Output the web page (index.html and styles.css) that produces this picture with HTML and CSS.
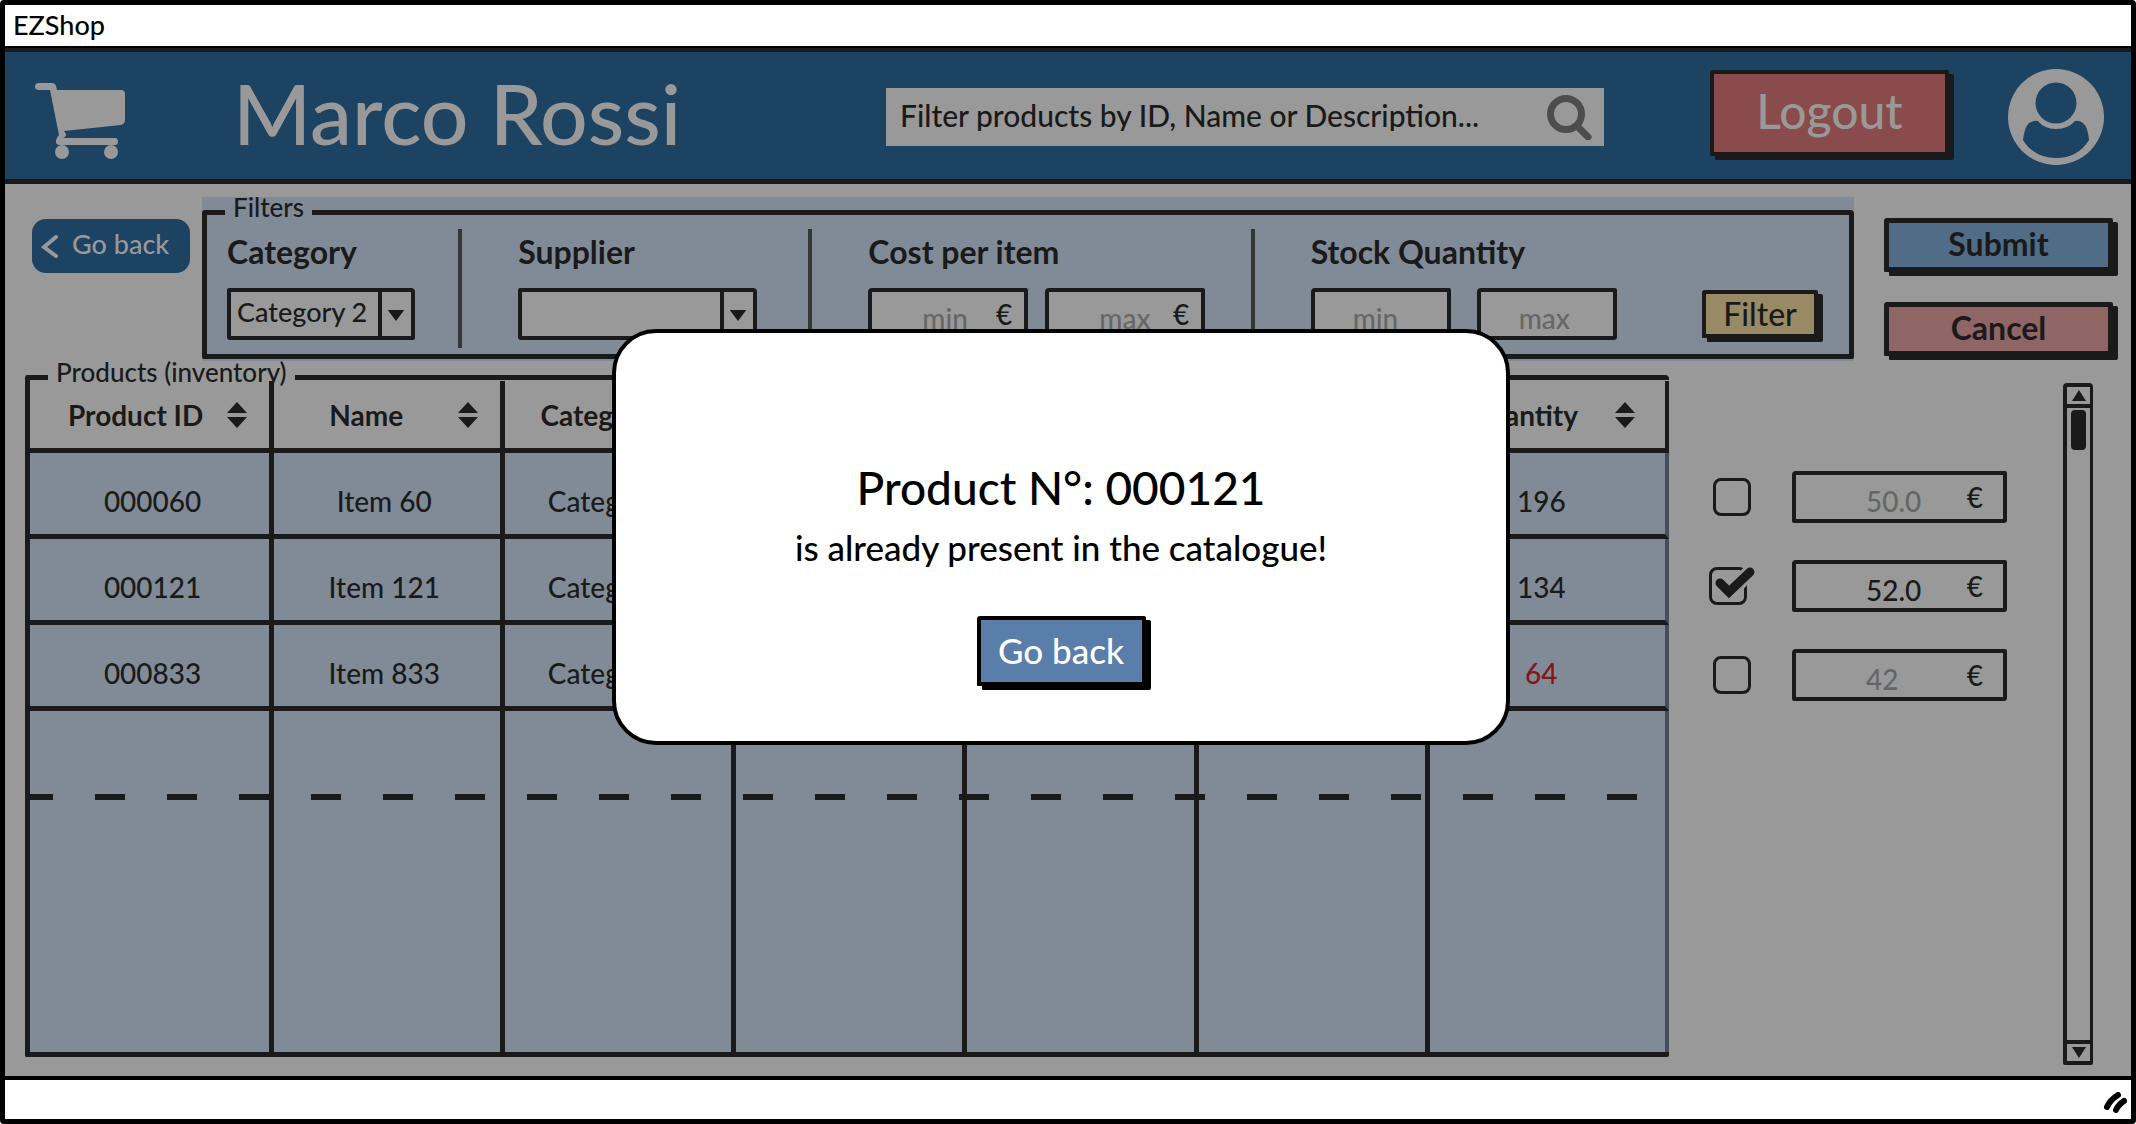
FILE: index.html
```html
<!DOCTYPE html>
<html lang="en">
<head>
<meta charset="utf-8">
<title>EZShop</title>
<link rel="stylesheet" href="styles.css">
</head>
<body>
<div class="window">
  <div class="titlebar">EZShop</div>

  <header class="header">
    <svg class="cart" viewBox="0 0 90 76" aria-hidden="true">
      <path d="M4 0H17Q20 0 21 3L22 7H86Q90 7 90 11V37Q90 41 86 42L29 48 31 51Q31 54 28 55H80Q83 55 83 58.500T80 62H25Q20 62 21 57Q22 54 24 52L15 7H4Q0 7 0 3.500T4 0Z"/>
      <circle cx="27" cy="69" r="7"/><circle cx="76" cy="69" r="7"/>
    </svg>
    <h1 class="user-name">Marco Rossi</h1>
    <form class="search" role="search">
      <input class="search-input" type="text" aria-label="Filter products" value="Filter products by ID, Name or Description...">
      <svg class="search-icon" viewBox="0 0 45 45" aria-hidden="true">
        <circle cx="19" cy="19" r="15.500"/><path d="M31 32L41 42"/>
      </svg>
    </form>
    <button class="sketch-button logout" type="button">Logout</button>
    <svg class="avatar" viewBox="0 0 96 96" aria-hidden="true">
      <circle class="avatar-disc" cx="48" cy="48" r="48"/>
      <circle cx="48" cy="34" r="20.500"/>
      <path d="M15 71Q17 55 23 53Q27 51 30 52Q36 60 48 60T67 52Q71 51 75 54Q80 58 81 71Q70 89 48 89T15 71Z"/>
    </svg>
  </header>

  <main class="main">
    <div class="toolbar">
      <button class="back" type="button">
        <svg class="chevron" viewBox="0 0 17 23" aria-hidden="true"><path d="M15 2L3 12L15 21"/></svg>
        Go back
      </button>

      <div class="filters-panel">
        <fieldset class="filters">
          <legend>Filters</legend>
          <div class="filter-groups">
            <div class="group group-category">
              <label class="group-title" for="category">Category</label>
              <div class="select-box">
                <select id="category"><option>Category 2</option></select>
                <svg class="select-arrow" viewBox="0 0 18 12" aria-hidden="true"><path d="M0 0H18L9 12Z"/></svg>
              </div>
            </div>
            <div class="group group-supplier">
              <label class="group-title" for="supplier">Supplier</label>
              <div class="select-box">
                <select id="supplier"><option></option></select>
                <svg class="select-arrow" viewBox="0 0 18 12" aria-hidden="true"><path d="M0 0H18L9 12Z"/></svg>
              </div>
            </div>
            <div class="group group-cost">
              <span class="group-title">Cost per item</span>
              <div class="range">
                <label class="field"><input type="text" placeholder="min" aria-label="Minimum cost"><span>€</span></label>
                <label class="field"><input type="text" placeholder="max" aria-label="Maximum cost"><span>€</span></label>
              </div>
            </div>
            <div class="group group-stock">
              <span class="group-title">Stock Quantity</span>
              <div class="range">
                <label class="field"><input type="text" placeholder="min" aria-label="Minimum stock"></label>
                <label class="field"><input type="text" placeholder="max" aria-label="Maximum stock"></label>
                <button class="sketch-button filter" type="button">Filter</button>
              </div>
            </div>
          </div>
        </fieldset>
      </div>

      <div class="actions">
        <button class="sketch-button submit" type="submit">Submit</button>
        <button class="sketch-button cancel" type="button">Cancel</button>
      </div>
    </div>

    <div class="inventory">
      <fieldset class="products">
        <legend>Products (inventory)</legend>
        <table class="product-table">
          <colgroup><col class="col-id"><col class="col-data" span="5"><col></colgroup>
          <thead>
            <tr>
              <th><div class="head"><span>Product ID</span><svg class="sort" viewBox="0 0 20 26"><path d="M10 0L20 11H0ZM0 15H20L10 26Z"/></svg></div></th>
              <th><div class="head"><span>Name</span><svg class="sort" viewBox="0 0 20 26"><path d="M10 0L20 11H0ZM0 15H20L10 26Z"/></svg></div></th>
              <th><div class="head"><span>Category</span><svg class="sort" viewBox="0 0 20 26"><path d="M10 0L20 11H0ZM0 15H20L10 26Z"/></svg></div></th>
              <th></th>
              <th></th>
              <th></th>
              <th><div class="head"><span>Quantity</span><svg class="sort" viewBox="0 0 20 26"><path d="M10 0L20 11H0ZM0 15H20L10 26Z"/></svg></div></th>
            </tr>
          </thead>
          <tbody>
            <tr><td>000060</td><td>Item 60</td><td>Category 2</td><td></td><td></td><td></td><td>196</td></tr>
            <tr><td>000121</td><td>Item 121</td><td>Category 1</td><td></td><td></td><td></td><td>134</td></tr>
            <tr><td>000833</td><td>Item 833</td><td>Category 3</td><td></td><td></td><td></td><td class="low">64</td></tr>
            <tr class="fold"><td></td><td></td><td></td><td></td><td></td><td></td><td></td></tr>
            <tr class="rest"><td></td><td></td><td></td><td></td><td></td><td></td><td></td></tr>
          </tbody>
        </table>
      </fieldset>

      <div class="prices">
        <div class="price-row">
          <input class="tick" type="checkbox" aria-label="Select 000060">
          <label class="field"><input type="text" placeholder="50.0" aria-label="Price of 000060"><span>€</span></label>
        </div>
        <div class="price-row">
          <span class="tick-box">
            <input class="tick" type="checkbox" checked aria-label="Select 000121">
            <svg class="tick-mark" viewBox="0 0 46 40" aria-hidden="true">
              <path class="tick-gap" d="M26 23L41 6"/><path d="M11 18L20 27L41 7"/>
            </svg>
          </span>
          <label class="field"><input type="text" value="52.0" aria-label="Price of 000121"><span>€</span></label>
        </div>
        <div class="price-row">
          <input class="tick" type="checkbox" aria-label="Select 000833">
          <label class="field"><input type="text" placeholder="42" aria-label="Price of 000833"><span>€</span></label>
        </div>
      </div>

      <div class="scrollbar" aria-hidden="true">
        <div class="scroll-end scroll-up"><svg viewBox="0 0 14 11"><path d="M7 0L14 11H0Z"/></svg></div>
        <div class="scroll-track"><div class="scroll-thumb"></div></div>
        <div class="scroll-end scroll-down"><svg viewBox="0 0 14 11"><path d="M0 0H14L7 11Z"/></svg></div>
      </div>
    </div>
  </main>

  <footer class="statusbar">
    <svg class="grip" viewBox="0 0 24 22" aria-hidden="true"><path d="M4 15Q7 8 15 3M13 18Q15 13 21 9"/></svg>
  </footer>

  <div class="overlay">
    <section class="modal" role="dialog" aria-modal="true" aria-labelledby="modal-title">
      <h2 id="modal-title" class="modal-title">Product N°: 000121</h2>
      <p class="modal-text">is already present in the catalogue!</p>
      <button class="sketch-button modal-button" type="button">Go back</button>
    </section>
  </div>
</div>
</body>
</html>
```
FILE: styles.css
```css
:root {
  --ink: #1a1a1a;
  --page: #999999;
  --panel: #818b97;
  --navy: #1d4362;
  --muted: #666666;
}

* { box-sizing: border-box; }

body {
  margin: 0;
  font-family: Lato, "Liberation Sans", sans-serif;
  font-size: 28px;
  font-weight: 500;
  line-height: 32px;
  color: var(--ink);
}

button, input, select { font: inherit; color: inherit; margin: 0; }

h1, h2, p { margin: 0; font-weight: 500; }

fieldset { margin: 0; padding: 0; min-width: 0; border: 5px solid var(--ink); border-radius: 3px 4px 2px 2px; }

legend {
  margin-left: 18px;
  padding: 0 8px 11px;
  font-size: 26px;
  line-height: 20px;
}

.window {
  position: relative;
  display: flex;
  flex-direction: column;
  min-height: 100vh;
  border: 5px solid #000;
  border-radius: 4px;
}

.titlebar {
  padding: 4px 8px 5px;
  background: #fff;
  color: #000;
  font-size: 27px;
  border-bottom: 2px solid #000;
}

/* Header */
.header {
  display: flex;
  align-items: center;
  padding: 17px 27px 14px 30px;
  background: var(--navy);
  color: var(--page);
  border-top: 4px solid var(--ink);
  border-bottom: 5px solid var(--ink);
}

.cart { width: 90px; height: 76px; fill: var(--page); margin-top: 8px; }

.user-name { flex: 1; margin-bottom: 8px; padding-left: 108px; font-size: 84px; line-height: 88px; }

.search {
  display: flex;
  align-items: center;
  width: 718px;
  height: 58px;
  padding: 0 12px 0 14px;
  background: var(--page);
  color: var(--ink);
}

.search-input { flex: 1; min-width: 0; padding: 0 0 4px; border: 0; background: none; font-size: 30px; outline: 0; }

.search-icon { width: 45px; height: 45px; fill: none; stroke: #4d4d4d; stroke-width: 7; stroke-linecap: round; }

.sketch-button {
  padding: 0;
  border: 4px solid var(--ink);
  border-radius: 3px 2px 2px 1px;
  box-shadow: 5px 4px 0 var(--ink);
  text-align: center;
}

.logout {
  width: 239px;
  height: 86px;
  margin: 0 59px 8px 106px;
  padding-bottom: 4px;
  background: #894b4b;
  font-size: 48px;
}

.avatar { width: 96px; height: 96px; fill: var(--navy); }
.avatar-disc { fill: var(--page); }

/* Filters */
.main { flex: 1; display: flex; flex-direction: column; background: var(--page); padding-top: 13px; }

.toolbar { display: flex; align-items: flex-start; padding: 0 18px 0 27px; }

.back {
  display: flex;
  align-items: center;
  gap: 14px;
  width: 158px;
  height: 54px;
  margin: 22px 12px 0 0;
  padding: 0 0 4px 9px;
  border: 0;
  border-radius: 14px;
  background: var(--navy);
  color: var(--page);
  font-size: 27px;
}

.chevron { width: 17px; height: 23px; margin-top: 4px; fill: none; stroke: currentColor; stroke-width: 4; stroke-linecap: round; }

.filters-panel { flex: 1; padding-bottom: 2px; background: var(--panel); }

.filter-groups {
  display: grid;
  grid-template-columns: 231fr 350fr 442fr 567fr;
  padding: 1px 31px 6px 20px;
}

.group { height: 119px; padding-top: 7px; }

.group + .group { padding-left: 56px; border-left: 4px solid #343638; }

.group-title { display: block; margin-bottom: 20px; font-size: 32px; font-weight: 700; }

.select-box { position: relative; width: 188px; }
.group-supplier .select-box { width: 239px; }

select {
  display: block;
  width: 100%;
  height: 52px;
  padding: 0 34px 4px 6px;
  border: 4px solid var(--ink);
  border-radius: 2px 4px 2px 3px;
  background: linear-gradient(var(--ink), var(--ink)) right 29px top 0 / 4px 100% no-repeat var(--page);
  appearance: none;
  font-size: 27px;
}

.select-arrow { position: absolute; right: 10px; top: 22px; width: 18px; height: 11px; fill: var(--ink); pointer-events: none; }

.range { display: flex; gap: 17px; }
.group-stock .range { gap: 26px; }

.field {
  display: flex;
  align-items: center;
  width: 160px;
  height: 52px;
  padding-right: 12px;
  border: 4px solid var(--ink);
  border-radius: 4px 2px 3px 2px;
  background: var(--page);
}
.group-stock .field { width: 140px; padding-right: 0; }

.field input {
  flex: 1;
  width: 0;
  padding: 8px 0 0;
  border: 0;
  background: none;
  outline: 0;
}
.group-cost .field input { padding-left: 50px; }
.group-stock .field input { padding-left: 38px; }

::placeholder { color: var(--muted); opacity: 1; }

.filter { width: 116px; height: 48px; margin: 2px 0 0 auto; background: #988a65; font-size: 32px; }

.actions { display: flex; flex-direction: column; gap: 30px; width: 229px; margin: 21px 0 0 30px; }
.actions .sketch-button { height: 54px; padding-bottom: 2px; border-width: 5px; font-size: 32px; font-weight: 700; }
.submit { background: #516c87; }
.cancel { background: #8f6565; }

/* Inventory */
.inventory { flex: 1; display: flex; padding: 1px 38px 11px 20px; }

.products { flex: 1; display: flex; flex-direction: column; border-right: 0; margin-bottom: 8px; }

.product-table {
  width: 100%;
  height: calc(100% + 12px);
  margin-top: -12px;
  border-collapse: separate;
  border-spacing: 0;
  table-layout: fixed;
}

.col-id { width: 14.9%; }
.col-data { width: 14.1%; }

th, td { padding: 0; border-right: 5px solid var(--ink); border-bottom: 5px solid var(--ink); }

th { height: 72px; font-weight: 700; vertical-align: top; padding-top: 18px; }
th:last-child { border-right-width: 4px; }

.head { display: flex; align-items: center; padding-right: 22px; }
th:first-child .head { padding-left: 14px; }
th:last-child .head { padding-right: 30px; }
.head span { flex: 1; text-align: center; }
.sort { width: 20px; height: 26px; fill: var(--ink); }

tbody { background: var(--panel); }
td { height: 86px; padding: 14px 6px 0 0; text-align: center; }
td:first-child { padding: 14px 0 0 6px; }
td:last-child { padding-right: 12px; border-right: 4px solid #434f5c; }

.low { color: #861616; }

.fold { background: repeating-linear-gradient(90deg, var(--ink) 0 23px, transparent 23px 65px, var(--ink) 65px 72px) left bottom / 100% 6px no-repeat; }
.fold td { height: 89px; border-bottom: 0; }
.rest td { height: auto; border-bottom: 0; }

.prices { display: flex; flex-direction: column; gap: 37px; width: 298px; margin: 109px 56px 0 40px; }

.price-row { display: flex; align-items: center; justify-content: space-between; }
.price-row .field { width: 215px; padding-right: 20px; }
.price-row .field input { padding-left: 70px; }

.tick {
  appearance: none;
  display: block;
  width: 38px;
  height: 38px;
  margin-left: 4px;
  border: 3px solid var(--ink);
  border-radius: 8px;
}

.tick-box { position: relative; }
.tick-box .tick { margin-left: 0; }

.tick-mark { position: absolute; left: 0; top: -2px; width: 46px; height: 40px; fill: none; stroke: var(--ink); stroke-width: 9; stroke-linecap: round; }
.tick-gap { stroke: var(--page); stroke-width: 14; stroke-linecap: butt; }

.scrollbar {
  display: flex;
  flex-direction: column;
  width: 30px;
  margin-top: 21px;
  border: 4px solid var(--ink);
  border-right-width: 3px;
  border-radius: 4px 4px 2px 2px;
}

.scroll-end { display: flex; align-items: center; justify-content: center; height: 21px; }
.scroll-end svg { width: 14px; height: 11px; fill: var(--ink); }
.scroll-up { border-bottom: 4px solid var(--ink); }
.scroll-down { border-top: 4px solid var(--ink); }
.scroll-track { flex: 1; padding: 2px 4px; }
.scroll-thumb { height: 40px; border-radius: 4px; background: var(--ink); }

/* Status bar */
.statusbar { display: flex; justify-content: flex-end; padding: 12px 4px 5px; background: #fff; border-top: 4px solid #000; }
.grip { width: 24px; height: 22px; fill: none; stroke: #000; stroke-width: 6; stroke-linecap: round; }

/* Dialog */
.overlay {
  position: absolute;
  inset: 0;
  display: flex;
  align-items: flex-start;
  justify-content: center;
  padding: 324px 14px 0 0;
}

.modal {
  display: flex;
  flex-direction: column;
  align-items: center;
  width: 898px;
  padding: 123px 0 55px;
  background: #fff;
  color: #000;
  border: 4px solid #000;
  border-radius: 44px;
}

.modal-title { font-size: 46px; line-height: 64px; }
.modal-text { margin-bottom: 42px; font-size: 35px; line-height: 54px; }

.modal-button {
  width: 169px;
  height: 70px;
  padding-bottom: 2px;
  background: #5a7eaa;
  color: #fff;
  border-color: #000;
  box-shadow: 5px 4px 0 #000;
  font-size: 35px;
}
```
